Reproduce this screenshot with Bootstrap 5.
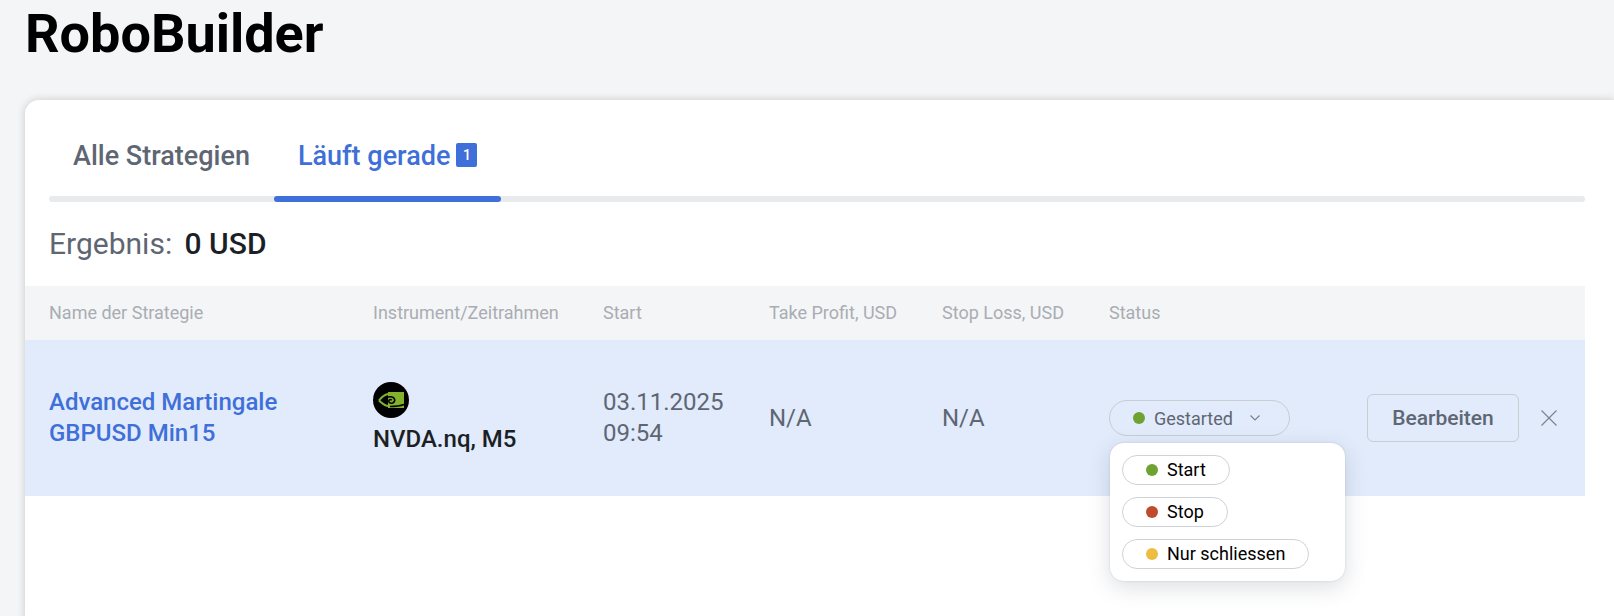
<!DOCTYPE html>
<html lang="de">
<head>
    <meta charset="UTF-8">
    <meta name="viewport" content="width=device-width, initial-scale=1.0">
    <title>RoboBuilder</title>
    <link rel="stylesheet" href="https://cdn.jsdelivr.net/npm/bootstrap@5.3.0/dist/css/bootstrap.min.css">
    <style>
        html, body {
            height: 616px;
            overflow: hidden;
        }
        body {
            background: #f4f5f7;
            font-family: Roboto, sans-serif;
            padding: 0 0 0 25px;
        }
        .page-title {
            font-size: 54px;
            font-weight: 700;
            line-height: 64px;
            margin: 2px 0 0;
            color: #000;
        }
        .strategy-card {
            margin-top: 34px;
            height: 520px;
            background: #fff;
            border-radius: 14px 0 0 0;
            box-shadow: 0 0 8px rgba(0, 0, 0, 0.18);
            padding-right: 29px;
        }
        .tab-bar {
            position: relative;
            margin-left: 24px;
            height: 102px;
            padding-top: 25px;
        }
        .tab-bar::after {
            content: "";
            position: absolute;
            left: 0;
            right: 0;
            bottom: 0;
            height: 6px;
            border-radius: 3px;
            background: #e9eaec;
        }
        .tab-bar .nav-link {
            position: relative;
            height: 77px;
            padding: 15px 24px 0;
            font-size: 27px;
            font-weight: 500;
            color: #5f6673;
            line-height: 32px;
            background: none;
            border: 0;
        }
        .tab-bar .nav-link.active {
            color: #3f6fd8;
        }
        .tab-bar .nav-link.active::after {
            content: "";
            position: absolute;
            z-index: 1;
            left: 0;
            right: 0;
            bottom: 0;
            height: 6px;
            border-radius: 3px;
            background: #3f6fd8;
        }
        .tab-count {
            display: inline-block;
            vertical-align: top;
            width: 21px;
            height: 24px;
            margin: 3px 0 0 6px;
            border-radius: 2px;
            background: #3f6fd8;
            color: #fff;
            font-size: 14px;
            font-weight: 500;
            line-height: 24px;
            text-align: center;
        }
        .result-line {
            height: 84px;
            margin-left: 24px;
            padding-top: 24px;
            font-size: 30px;
            line-height: 36px;
            color: #5f6673;
        }
        .result-line strong {
            margin-left: 5px;
            font-weight: 500;
            color: #1c1f25;
        }
        .strategy-table {
            table-layout: fixed;
            width: 100%;
            margin: 0;
        }
        .strategy-table th {
            height: 54px;
            padding: 0 0 2px 24px;
            background: #f4f5f7;
            border: 0;
            font-size: 18px;
            font-weight: 400;
            color: #a9adb3;
            vertical-align: middle;
            white-space: nowrap;
        }
        .strategy-table td {
            height: 156px;
            padding: 0 0 0 24px;
            background: #e1ebfb;
            border: 0;
            font-size: 24px;
            line-height: 31px;
            color: #5f6673;
            vertical-align: middle;
            box-shadow: none;
        }
        .strategy-name {
            color: #3f6fd8;
            font-weight: 500;
            text-decoration: none;
        }
        .symbol-logo {
            display: block;
            width: 36px;
            height: 36px;
            margin-bottom: 6px;
        }
        .symbol-name {
            color: #1c1f25;
            font-weight: 500;
        }
        .actions-cell {
            position: relative;
        }
        .status-pill {
            display: inline-flex;
            align-items: center;
            flex: none;
            width: 181px;
            height: 36px;
            padding: 0 0 0 23px;
            border: 1px solid #c8ccd3;
            border-radius: 18px;
            background: transparent;
            color: #5f6673;
            font-size: 18px;
        }
        .status-dot {
            display: inline-block;
            flex: none;
            width: 12px;
            height: 12px;
            border-radius: 50%;
            margin-right: 9px;
        }
        .dot-green { background: #6fa331; }
        .dot-red { background: #bf4a2c; }
        .dot-yellow { background: #ecbd41; }
        .edit-btn {
            flex: none;
            width: 152px;
            height: 48px;
            margin-left: 77px;
            padding: 0;
            border: 1px solid #c8ccd3;
            border-radius: 6px;
            background: transparent;
            color: #5f6673;
            font-size: 21px;
            font-weight: 500;
        }
        .close-icon {
            flex: none;
            margin-left: 22px;
            vertical-align: middle;
        }
        .status-menu {
            position: absolute;
            top: 103px;
            left: 25px;
            width: 235px;
            height: 138px;
            padding: 12px;
            background: #fff;
            border-radius: 14px;
            box-shadow: 0 6px 22px rgba(60, 70, 90, 0.18), 0 0 2px rgba(60, 70, 90, 0.2);
        }
        .status-option {
            display: flex;
            align-items: center;
            width: fit-content;
            height: 30px;
            margin-bottom: 12px;
            padding: 0 23px;
            border: 1px solid #cfd2d8;
            border-radius: 15px;
            color: #000;
            font-size: 18px;
            line-height: 28px;
        }
    </style>
</head>
<body>

    <h1 class="page-title">RoboBuilder</h1>

    <div class="strategy-card">
        <ul class="nav tab-bar">
            <li class="nav-item"><a class="nav-link" href="#">Alle Strategien</a></li>
            <li class="nav-item"><a class="nav-link active" href="#">Läuft gerade<span class="tab-count">1</span></a></li>
        </ul>

        <div class="result-line">Ergebnis: <strong>0 USD</strong></div>

        <table class="table strategy-table">
            <colgroup>
                <col style="width: 324px">
                <col style="width: 230px">
                <col style="width: 166px">
                <col style="width: 173px">
                <col style="width: 167px">
                <col>
            </colgroup>
            <thead>
                <tr>
                    <th>Name der Strategie</th>
                    <th>Instrument/Zeitrahmen</th>
                    <th>Start</th>
                    <th>Take Profit, USD</th>
                    <th>Stop Loss, USD</th>
                    <th>Status</th>
                </tr>
            </thead>
            <tbody>
                <tr>
                    <td><a class="strategy-name" href="#">Advanced Martingale<br>GBPUSD Min15</a></td>
                    <td>
                        <svg class="symbol-logo" viewBox="0 0 36 36">
                            <circle cx="18" cy="18" r="18" fill="#000"/>
                            <rect x="15" y="10" width="16" height="16" fill="#82b22c"/>
                            <path d="M6 18.500c3-4 6-6 9-6.500M6 18.500c3 3 6 5 9 5.500" fill="none" stroke="#82b22c" stroke-width="2"/>
                            <path d="M10 18.500c2-3 6-4.500 9-3.500 3.500 1 3.500 5 .5 6-2.500.7-4.500-1-3.500-2.800.7-1 2-1 2.800 0" fill="none" stroke="#000" stroke-width="1.600"/>
                            <path d="M17 24.500c5 0 10-.5 14-2" fill="none" stroke="#000" stroke-width="1.600"/>
                        </svg>
                        <span class="symbol-name">NVDA.nq, M5</span>
                    </td>
                    <td>03.11.2025<br>09:54</td>
                    <td>N/A</td>
                    <td>N/A</td>
                    <td class="actions-cell">
                        <div class="d-flex align-items-center">
                            <div class="status-pill">
                                <span class="status-dot dot-green"></span>Gestarted
                                <svg class="ms-3" width="12" height="8" viewBox="0 0 12 8"><path d="M1.500 1.500 6 6l4.500-4.500" fill="none" stroke="#7d838e" stroke-width="1.200"/></svg>
                            </div>
                            <button class="edit-btn" type="button">Bearbeiten</button>
                            <svg class="close-icon" width="16" height="16" viewBox="0 0 16 16"><path d="M.5.5l15 15M15.500 .5l-15 15" fill="none" stroke="#7d838e" stroke-width="1.200"/></svg>
                        </div>
                        <div class="status-menu">
                            <div class="status-option"><span class="status-dot dot-green"></span>Start</div>
                            <div class="status-option"><span class="status-dot dot-red"></span>Stop</div>
                            <div class="status-option"><span class="status-dot dot-yellow"></span>Nur schliessen</div>
                        </div>
                    </td>
                </tr>
            </tbody>
        </table>
    </div>

    <script src="https://cdn.jsdelivr.net/npm/bootstrap@5.3.0/dist/js/bootstrap.bundle.min.js"></script>
</body>
</html>
